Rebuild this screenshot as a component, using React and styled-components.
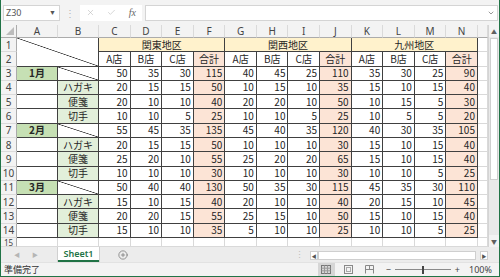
import React from 'react'
import styled, { createGlobalStyle, css } from 'styled-components'
import { X, Check, ChevronDown, CirclePlus } from 'lucide-react'

const GREEN = '#217346'
const LINE = '#404040'
const GRID = '#d9d9d9'
const HEAD = '#f3f3f3'

const COLS = ['A', 'B', 'C', 'D', 'E', 'F', 'G', 'H', 'I', 'J', 'K', 'L', 'M', 'N', '']
const REGIONS = ['関東地区', '関西地区', '九州地区']
const SHOPS = ['A店', 'B店', 'C店', '合計']
const ITEMS = ['ハガキ', '便箋', '切手']

const MONTHS = [
  {
    label: '1月',
    rows: [
      [50, 35, 30, 115, 40, 45, 25, 110, 35, 30, 25, 90],
      [20, 15, 15, 50, 10, 15, 10, 35, 15, 10, 15, 40],
      [20, 10, 10, 40, 20, 20, 10, 50, 10, 15, 5, 30],
      [10, 10, 5, 25, 10, 10, 5, 25, 10, 5, 5, 20],
    ],
  },
  {
    label: '2月',
    rows: [
      [55, 45, 35, 135, 45, 40, 35, 120, 40, 30, 35, 105],
      [20, 15, 15, 50, 10, 10, 10, 30, 15, 10, 15, 40],
      [25, 20, 10, 55, 25, 20, 20, 65, 15, 10, 15, 40],
      [10, 10, 10, 30, 10, 10, 10, 30, 10, 10, 5, 25],
    ],
  },
  {
    label: '3月',
    rows: [
      [50, 40, 40, 130, 50, 35, 30, 115, 45, 35, 30, 110],
      [15, 10, 15, 40, 20, 10, 10, 40, 20, 15, 10, 45],
      [20, 20, 15, 55, 25, 15, 10, 50, 15, 10, 15, 40],
      [15, 10, 10, 35, 5, 10, 10, 25, 10, 10, 5, 25],
    ],
  },
]

const GlobalStyle = createGlobalStyle`
  html, body {
    margin: 0;
    padding: 0;
    background: #fff;
  }
  body {
    font-family: "Noto Sans CJK JP", "Noto Sans", sans-serif;
  }
`

const Window = styled.div`
  width: 500px;
  height: 277px;
  box-sizing: border-box;
  border: 1px solid ${GREEN};
  border-top: none;
  background: ${HEAD};
  display: flex;
  flex-direction: column;
  overflow: hidden;
`

const FormulaBar = styled.div`
  height: 25px;
  flex: none;
  display: flex;
  align-items: center;
  padding: 0 1px 0 2px;
`

const NameBox = styled.div`
  width: 57px;
  height: 16px;
  box-sizing: border-box;
  background: #fff;
  border: 1px solid #d4d4d4;
  display: flex;
  align-items: center;
  justify-content: space-between;
  padding: 0 3px 0 2px;
  font-family: "Noto Sans", sans-serif;
  font-size: 9px;
  color: #555;
`

const Caret = styled.span`
  font-size: 7px;
  color: #555;
`

const Grip = styled.span`
  width: 20px;
  text-align: center;
  color: #b5b5b5;
  font-size: 10px;
`

const FxGroup = styled.div`
  width: 62px;
  height: 16px;
  background: #fff;
  display: flex;
  align-items: center;
  justify-content: space-around;
  color: #b8b8b8;
`

const Fx = styled.span`
  font-family: "Liberation Serif", serif;
  font-style: italic;
  font-size: 10px;
  color: #666;
`

const FormulaInput = styled.div`
  flex: 1;
  height: 16px;
  margin-left: 3px;
  box-sizing: border-box;
  background: #fff;
  border: 1px solid #d4d4d4;
  display: flex;
  align-items: center;
  justify-content: flex-end;
  padding-right: 2px;
  color: #666;
`

const SheetArea = styled.div`
  height: 222px;
  flex: none;
  display: flex;
`

const Sheet = styled.div`
  width: 487px;
  height: 222px;
  display: grid;
  grid-template-columns: 16px 41px 41px repeat(12, 31.58px) 1fr;
  grid-template-rows: 13px repeat(14, 14.29px) 1fr;
  background: #fff;
`

const Corner = styled.div`
  background: ${HEAD};
  border-right: 1px solid #ababab;
  border-bottom: 1px solid #ababab;
  display: flex;
  align-items: flex-end;
  justify-content: flex-end;
  padding: 0 2px 2px 0;
`

const Triangle = styled.span`
  width: 8px;
  height: 8px;
  background: #bcbcbc;
  clip-path: polygon(100% 0, 100% 100%, 0 100%);
`

const ColHead = styled.div`
  background: ${HEAD};
  border-right: 1px solid #dadada;
  border-bottom: 1px solid #ababab;
  display: flex;
  align-items: center;
  justify-content: center;
  font-family: "Noto Sans", sans-serif;
  font-size: 10px;
  color: #444;
  line-height: 1;
`

const RowHead = styled.div`
  background: ${HEAD};
  border-right: 1px solid #ababab;
  border-bottom: 1px solid #dadada;
  display: flex;
  align-items: ${p => (p.$cut ? 'flex-start' : 'center')};
  justify-content: center;
  padding-top: ${p => (p.$cut ? 1 : 0)}px;
  font-family: "Noto Sans", sans-serif;
  font-size: ${p => (p.$cut ? 8 : 10)}px;
  color: #444;
  line-height: 1;
  overflow: hidden;
`

const Cell = styled.div`
  box-sizing: border-box;
  display: flex;
  align-items: center;
  justify-content: ${p => (p.$right ? 'flex-end' : 'center')};
  padding: 0 2px;
  border-right: 1px solid ${p => (p.$grid ? GRID : LINE)};
  border-bottom: 1px solid ${p => (p.$grid ? GRID : LINE)};
  background-color: ${p => p.$bg || '#fff'};
  grid-column: span ${p => p.$span || 1};
  grid-row: span ${p => p.$rows || 1};
  font-size: 10px;
  font-weight: ${p => (p.$bold ? 700 : 400)};
  color: #262626;
  line-height: 1;
  white-space: nowrap;
  overflow: hidden;
  ${p =>
    p.$diag &&
    css`
      background-image: linear-gradient(
        to top right,
        transparent calc(50% - 0.7px),
        #333 50%,
        transparent calc(50% + 0.7px)
      );
    `}
`

const VScroll = styled.div`
  flex: 1;
  display: flex;
  flex-direction: column;
  background: #e9e9e9;
  border-left: 1px solid #d4d4d4;
`

const ArrowBox = styled.div`
  height: 12px;
  display: flex;
  align-items: center;
  justify-content: center;
  font-size: 6px;
  color: #606060;
  background: #f3f3f3;
`

const VThumb = styled.div`
  height: 140px;
  margin: 1px 1px 0;
  background: #fff;
  border: 1px solid #cfcfcf;
`

const Track = styled.div`
  flex: 1;
`

const TabBar = styled.div`
  height: 15px;
  flex: none;
  display: flex;
  align-items: stretch;
  background: #ececec;
`

const TabNav = styled.div`
  width: 57px;
  display: flex;
  align-items: center;
  gap: 12px;
  padding-left: 13px;
  box-sizing: border-box;
  font-size: 6px;
  color: #b5b5b5;
`

const SheetTab = styled.div`
  width: 41px;
  box-sizing: border-box;
  background: #fff;
  border-bottom: 2px solid ${GREEN};
  display: flex;
  align-items: center;
  justify-content: center;
  font-family: "Noto Sans", sans-serif;
  font-size: 9px;
  font-weight: 600;
  color: ${GREEN};
  box-shadow: 1px 0 0 #d0d0d0, -1px 0 0 #d0d0d0;
`

const AddSheet = styled.div`
  width: 48px;
  display: flex;
  align-items: center;
  justify-content: center;
  color: #6a6a6a;
`

const TabSpacer = styled.div`
  flex: 1;
  display: flex;
  align-items: center;
  justify-content: flex-end;
  padding-right: 6px;
  color: #bdbdbd;
  font-size: 9px;
`

const HScroll = styled.div`
  width: 178px;
  display: flex;
  align-items: center;
  padding: 3px 0 1px;
  box-sizing: border-box;
`

const HArrow = styled.div`
  width: 8px;
  height: 9px;
  display: flex;
  align-items: center;
  justify-content: center;
  font-size: 5px;
  color: #555;
  background: #fff;
  border: 1px solid #cfcfcf;
  box-sizing: border-box;
`

const HThumb = styled.div`
  flex: 1;
  height: 9px;
  box-sizing: border-box;
  background: #fff;
  border: 1px solid #cfcfcf;
  margin-right: 4px;
`

const HEnd = styled.div`
  width: 11px;
`

const StatusBar = styled.div`
  flex: 1;
  display: flex;
  align-items: center;
  padding-left: 3px;
  font-size: 9px;
  color: #333;
  background: #f3f3f3;
  border-top: 1px solid #e2e2e2;
`

const StatusText = styled.span`
  flex: 1;
`

const ViewBtn = styled.div`
  width: ${p => (p.$active ? 17 : 12)}px;
  height: 13px;
  margin-right: ${p => p.$gap || 0}px;
  display: flex;
  align-items: center;
  justify-content: center;
  background: ${p => (p.$active ? '#d6d6d6' : 'transparent')};
  color: #777;
`

const Zoom = styled.div`
  display: flex;
  align-items: center;
  margin-left: 10px;
  font-family: "Noto Sans", sans-serif;
  font-size: 9px;
  color: #444;
`

const Slider = styled.div`
  width: 56px;
  height: 1px;
  margin: 0 4px;
  background: #8a8a8a;
  display: flex;
  justify-content: center;
  align-items: center;
`

const SliderThumb = styled.span`
  width: 2px;
  height: 8px;
  background: #444;
`

const Percent = styled.span`
  margin-left: 9px;
  width: 30px;
`

const NormalIcon = () => (
  <svg width="10" height="9" viewBox="0 0 10 9">
    <rect x="0.5" y="0.5" width="9" height="8" fill="none" stroke="#777" />
    <path d="M0.5 3.2h9M0.5 5.8h9M3.5 0.5v8M6.5 0.5v8" stroke="#999" />
  </svg>
)

const LayoutIcon = () => (
  <svg width="9" height="9" viewBox="0 0 9 9">
    <rect x="0.5" y="0.5" width="8" height="8" fill="none" stroke="#888" />
    <rect x="2.5" y="2.5" width="4" height="4" fill="none" stroke="#aaa" />
  </svg>
)

const BreakIcon = () => (
  <svg width="9" height="9" viewBox="0 0 9 9">
    <path d="M0.5 8.5v-8h8v8M4.5 0.5v4M0.5 4.5h8" fill="none" stroke="#888" />
  </svg>
)

const renderValues = values =>
  values.map((v, i) => (
    <Cell key={i} $right $bg={i % 4 === 3 ? '#fce4d6' : undefined}>
      {v}
    </Cell>
  ))

const App = () => {
  let rowNo = 2
  return (
    <Window>
      <GlobalStyle />
      <FormulaBar>
        <NameBox>
          Z30
          <Caret>▼</Caret>
        </NameBox>
        <Grip>⋮</Grip>
        <FxGroup>
          <X size={9} strokeWidth={1.5} />
          <Check size={9} strokeWidth={1.5} />
          <Fx>fx</Fx>
        </FxGroup>
        <FormulaInput>
          <ChevronDown size={8} strokeWidth={2} />
        </FormulaInput>
      </FormulaBar>

      <SheetArea>
        <Sheet>
          <Corner>
            <Triangle />
          </Corner>
          {COLS.map((c, i) => (
            <ColHead key={i}>{c}</ColHead>
          ))}

          <RowHead>1</RowHead>
          <Cell $span={2} $rows={2} $diag />
          {REGIONS.map(r => (
            <Cell key={r} $span={4} $bg="#fff2cc">
              {r}
            </Cell>
          ))}
          <Cell $grid />

          <RowHead>2</RowHead>
          {REGIONS.map(r =>
            SHOPS.map(s => (
              <Cell key={r + s} $bg={s === '合計' ? '#fce4d6' : undefined}>
                {s}
              </Cell>
            ))
          )}
          <Cell $grid />

          {MONTHS.map(m => (
            <React.Fragment key={m.label}>
              {m.rows.map((values, i) => {
                rowNo += 1
                return (
                  <React.Fragment key={i}>
                    <RowHead>{rowNo}</RowHead>
                    {i === 0 ? (
                      <>
                        <Cell $bg="#c6e0b4" $bold>
                          {m.label}
                        </Cell>
                        <Cell $diag />
                      </>
                    ) : (
                      <>
                        <Cell />
                        <Cell $bg="#e2efda">{ITEMS[i - 1]}</Cell>
                      </>
                    )}
                    {renderValues(values)}
                    <Cell $grid />
                  </React.Fragment>
                )
              })}
            </React.Fragment>
          ))}

          <RowHead $cut>15</RowHead>
          {COLS.map((c, i) => (
            <Cell key={i} $grid />
          ))}
        </Sheet>
        <VScroll>
          <ArrowBox>▲</ArrowBox>
          <VThumb />
          <Track />
          <ArrowBox>▼</ArrowBox>
        </VScroll>
      </SheetArea>

      <TabBar>
        <TabNav>
          <span>◀</span>
          <span>▶</span>
        </TabNav>
        <SheetTab>Sheet1</SheetTab>
        <AddSheet>
          <CirclePlus size={10} strokeWidth={1.6} />
        </AddSheet>
        <TabSpacer>⋮</TabSpacer>
        <HScroll>
          <HArrow>◀</HArrow>
          <HThumb />
          <HArrow>▶</HArrow>
        </HScroll>
        <HEnd />
      </TabBar>

      <StatusBar>
        <StatusText>準備完了</StatusText>
        <ViewBtn $active $gap={8}>
          <NormalIcon />
        </ViewBtn>
        <ViewBtn $gap={9}>
          <LayoutIcon />
        </ViewBtn>
        <ViewBtn>
          <BreakIcon />
        </ViewBtn>
        <Zoom>
          <span>−</span>
          <Slider>
            <SliderThumb />
          </Slider>
          <span>+</span>
          <Percent>100%</Percent>
        </Zoom>
      </StatusBar>
    </Window>
  )
}

export default App
